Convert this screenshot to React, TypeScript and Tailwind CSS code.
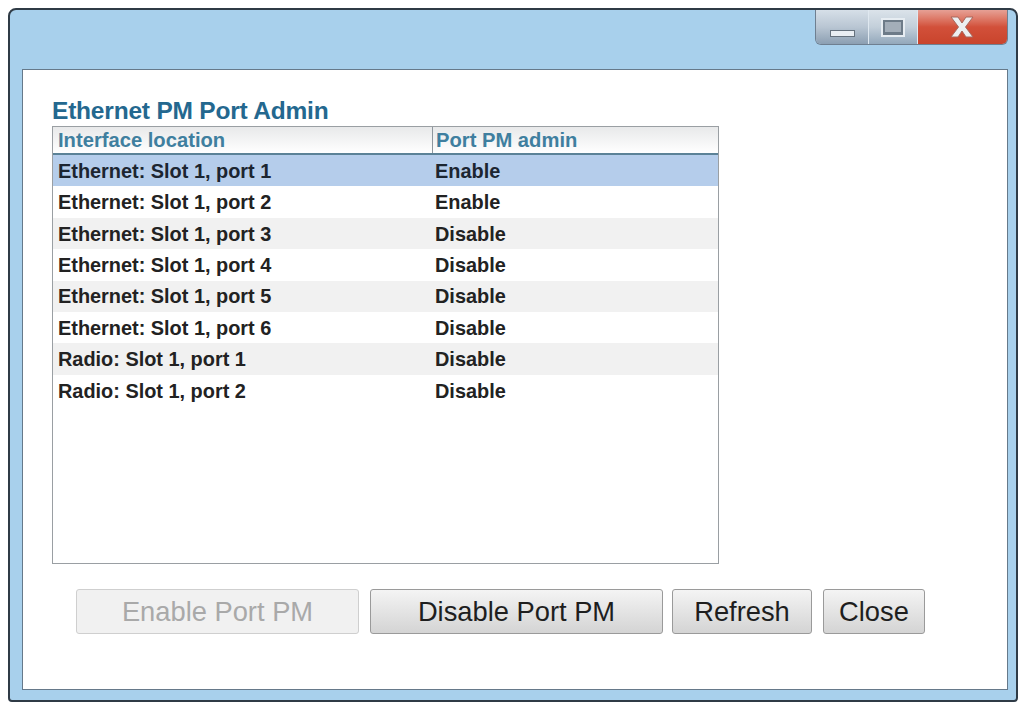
import React from 'react';

const rows = [
  { name: 'Ethernet: Slot 1, port 1', admin: 'Enable' },
  { name: 'Ethernet: Slot 1, port 2', admin: 'Enable' },
  { name: 'Ethernet: Slot 1, port 3', admin: 'Disable' },
  { name: 'Ethernet: Slot 1, port 4', admin: 'Disable' },
  { name: 'Ethernet: Slot 1, port 5', admin: 'Disable' },
  { name: 'Ethernet: Slot 1, port 6', admin: 'Disable' },
  { name: 'Radio: Slot 1, port 1', admin: 'Disable' },
  { name: 'Radio: Slot 1, port 2', admin: 'Disable' },
];

const WindowControls = () => (
  <div className="flex h-[35px] w-[193px] overflow-hidden rounded-b-[6px] border border-t-0 border-[#6f7f90]">
    <div className="flex w-[53px] items-end justify-center border-r border-[#dfe8f0] bg-gradient-to-b from-[#d6dfe8] via-[#b9c6d3] to-[#8c9fb2] pb-[7px]">
      <div className="h-[7px] w-[25px] border border-[#65717d] bg-[#e9eef3]" />
    </div>
    <div className="flex w-[49px] items-center justify-center border-r border-[#dfe8f0] bg-gradient-to-b from-[#dbe3ea] via-[#c3cfda] to-[#93a8bb]">
      <div className="flex h-[19px] w-[24px] items-center justify-center border-2 border-[#e7edf2] bg-[#6d7b88]">
        <div className="h-[10px] w-[16px] bg-[#a3aeb9]" />
      </div>
    </div>
    <div className="flex flex-1 items-center justify-center bg-gradient-to-b from-[#e6a095] via-[#d2503a] to-[#c9442c] pr-[2px]">
      <svg width="28" height="24" viewBox="0 0 28 24">
        <path d="M3 2 H10 L14 8 L18 2 H25 L17.5 12 L25 22 H18 L14 16 L10 22 H3 L10.5 12 Z" fill="#eceff1" stroke="#a8675c" strokeWidth="1" />
      </svg>
    </div>
  </div>
);

const App = () => {
  return (
    <div className="h-[703px] w-[1026px] overflow-hidden bg-white pl-[8px] pt-[8px] font-['Liberation_Sans',Arial,sans-serif]">
      <div className="flex h-[694px] w-[1010px] flex-col rounded-t-[8px] rounded-b-[4px] border-2 border-[#2f3b46] bg-[#a8d0ec] pr-[8px] pl-[12px] pb-[10px]">
        <div className="flex h-[59px] shrink-0 justify-end">
          <WindowControls />
        </div>
        <div className="flex-1 border border-[#66798a] bg-white pl-[29px] pt-[28px]">
          <h1 className="h-[28px] text-[24.5px] leading-[26px] font-bold tracking-[-0.2px] text-[#24688f]">
            Ethernet PM Port Admin
          </h1>
          <div className="h-[438px] w-[667px] border border-[#9a9fa3]">
            <div className="flex h-[28px] border-b-2 border-[#5b8297] bg-gradient-to-b from-[#e8e9ea] to-white text-[20.2px] leading-[27px] font-bold text-[#3f7f9f]">
              <div className="w-[380px] border-r border-[#8f979e] pl-[5px]">Interface location</div>
              <div className="pl-[3px]">Port PM admin</div>
            </div>
            {rows.map((row, i) => (
              <div
                key={row.name}
                className={
                  i === 0
                    ? 'flex h-[31.4px] items-center bg-[#b5cdeb] pt-[2px] text-[19.9px] font-bold text-[#1c2530]'
                    : i % 2 === 0
                      ? 'flex h-[31.4px] items-center bg-[#f1f1f1] pt-[2px] text-[19.9px] font-bold text-[#222222]'
                      : 'flex h-[31.4px] items-center bg-white pt-[2px] text-[19.9px] font-bold text-[#222222]'
                }
              >
                <div className="w-[381px] pl-[5px]">{row.name}</div>
                <div className="pl-[1px]">{row.admin}</div>
              </div>
            ))}
          </div>
          <div className="mt-[25px] flex text-[27.3px]">
            <button className="ml-[24px] h-[45px] w-[283px] rounded-[3px] border border-[#cfcfcf] bg-[#f1f1f1] pt-[2px] text-[#a9a9a9]">
              Enable Port PM
            </button>
            <button className="ml-[11px] h-[45px] w-[293px] rounded-[3px] border border-[#9a9a9a] bg-gradient-to-b from-[#f4f4f4] to-[#d4d4d4] pt-[2px] text-[#1e1e1e]">
              Disable Port PM
            </button>
            <button className="ml-[9px] h-[45px] w-[140px] rounded-[3px] border border-[#9a9a9a] bg-gradient-to-b from-[#f4f4f4] to-[#d4d4d4] pt-[2px] text-[#1e1e1e]">
              Refresh
            </button>
            <button className="ml-[11px] h-[45px] w-[102px] rounded-[3px] border border-[#9a9a9a] bg-gradient-to-b from-[#f4f4f4] to-[#d4d4d4] pt-[2px] text-[#1e1e1e]">
              Close
            </button>
          </div>
        </div>
      </div>
    </div>
  );
};

export default App;
